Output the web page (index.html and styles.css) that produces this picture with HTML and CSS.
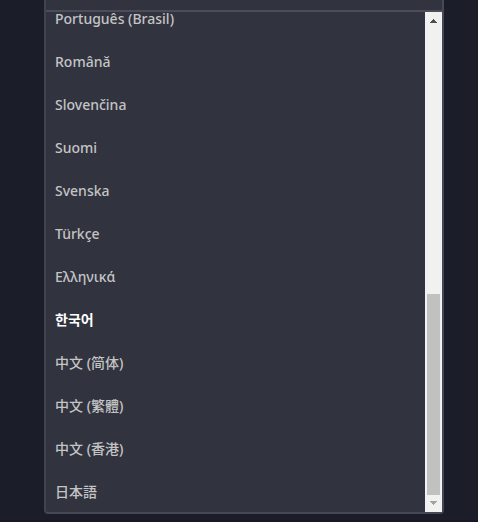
FILE: index.html
```
<!DOCTYPE html>
<html lang="en">
<head>
<meta charset="utf-8">
<title>Language</title>
<link rel="stylesheet" href="styles.css">
</head>
<body>
<main class="panel">
  <div class="panel-head"></div>
  <div class="panel-body">
    <ul class="languages">
      <li><button type="button" lang="pt-BR">Português (Brasil)</button></li>
      <li><button type="button" lang="ro">Română</button></li>
      <li><button type="button" lang="sk">Slovenčina</button></li>
      <li><button type="button" lang="fi">Suomi</button></li>
      <li><button type="button" lang="sv">Svenska</button></li>
      <li><button type="button" lang="tr">Türkçe</button></li>
      <li><button type="button" lang="el">Ελληνικά</button></li>
      <li><button type="button" lang="ko" class="selected" aria-current="true">한국어</button></li>
      <li><button type="button" lang="zh-CN">中文 (简体)</button></li>
      <li><button type="button" lang="zh-TW">中文 (繁體)</button></li>
      <li><button type="button" lang="zh-HK">中文 (香港)</button></li>
      <li><button type="button" lang="ja">日本語</button></li>
    </ul>
    <div class="scrollbar" aria-hidden="true">
      <svg class="arrow up" viewBox="0 0 17 17" shape-rendering="crispEdges"><path d="M8 7h1v1h1v1h1v1h1v1H5v-1h1V9h1V8h1z"/></svg>
      <div class="track"><div class="thumb"></div></div>
      <svg class="arrow down" viewBox="0 0 17 17" shape-rendering="crispEdges"><path d="M5 6h7v1h-1v1h-1v1H9v1H8V9H7V8H6V7H5z"/></svg>
    </div>
  </div>
</main>
</body>
</html>
```
FILE: styles.css
```
* {
  box-sizing: border-box;
}

body {
  margin: 0;
  height: 100vh;
  padding: 0 34px 6px 44px;
  display: flex;
  background: #1b1d29;
  border-bottom: 2px solid #1d1525;
  font-family: "Noto Sans", "Noto Sans CJK JP", sans-serif;
}

.panel {
  flex: 1;
  min-width: 0;
  display: flex;
  flex-direction: column;
  background: #31333f;
  border: 2px solid #464855;
  border-left-color: #41434f;
  border-top: 0;
  border-radius: 0 0 4px 4px;
}

.panel-head {
  height: 12px;
  flex: none;
  border-bottom: 2px solid #4b4d5a;
}

.panel-body {
  flex: 1;
  min-height: 0;
  display: flex;
}

.languages {
  flex: 1;
  margin: 0;
  padding: 0;
  list-style: none;
  display: flex;
  flex-direction: column;
  justify-content: flex-end;
  overflow: hidden;
}

.languages li {
  flex: none;
}

.languages button {
  display: block;
  width: 100%;
  height: 43px;
  padding: 2px 9px 0;
  border: 0;
  background: none;
  color: #c4c4c5;
  font: 500 14px/20px "Noto Sans", "Noto Sans CJK JP", sans-serif;
  text-align: left;
}

.languages button:lang(ko) {
  font-family: "Noto Sans", "Noto Sans CJK KR", sans-serif;
}

.languages button:lang(zh-CN) {
  font-family: "Noto Sans", "Noto Sans CJK SC", sans-serif;
}

.languages button:lang(zh-TW),
.languages button:lang(zh-HK) {
  font-family: "Noto Sans", "Noto Sans CJK TC", sans-serif;
}

.languages .selected {
  color: #fff;
  font-weight: 700;
}

.scrollbar {
  width: 17px;
  display: flex;
  flex-direction: column;
  background: #f1f1f1;
}

.arrow {
  width: 17px;
  height: 17px;
  flex: none;
}

.up {
  fill: #505050;
}

.down {
  fill: #a3a3a3;
}

.track {
  flex: 1;
  padding: 0 2px;
  display: flex;
  flex-direction: column;
  justify-content: flex-end;
}

.thumb {
  height: 201px;
  background: #c1c1c1;
}
```
